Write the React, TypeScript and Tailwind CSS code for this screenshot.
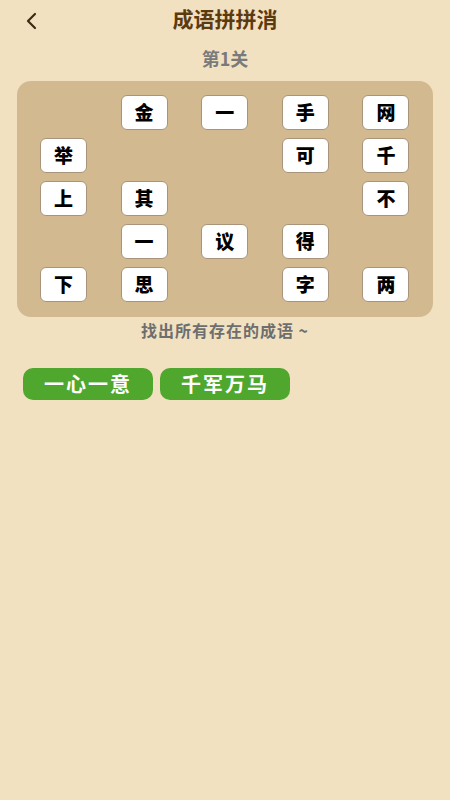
import React from "react";

const grid: (string | null)[][] = [
  [null, "金", "一", "手", "网"],
  ["举", null, null, "可", "千"],
  ["上", "其", null, null, "不"],
  [null, "一", "议", "得", null],
  ["下", "思", null, "字", "两"],
];

const found = ["一心一意", "千军万马"];

const font = { fontFamily: '"Noto Sans CJK SC", "Noto Sans", sans-serif' };

export default function App() {
  return (
    <div className="min-h-[800px] w-[450px] bg-[#f2e1c0]" style={font}>
      <div className="relative flex h-[36px] items-center justify-center">
        <button className="absolute left-[20px] top-[7px] p-1 text-[#3e2b12]">
          <svg width="16" height="20" viewBox="0 0 16 20" fill="none">
            <path d="M11 3L4 10l7 7" stroke="currentColor" strokeWidth="2.2" strokeLinecap="round" strokeLinejoin="round" />
          </svg>
        </button>
        <h1 className="text-[21px] font-bold leading-none text-[#5b3a10]">成语拼拼消</h1>
      </div>
      <div className="flex h-[45px] items-center justify-center text-[18px] font-bold text-[#7a7a7a]">
        第1关
      </div>
      <div className="mx-[17px] rounded-[14px] bg-[#d3b98f] px-[23px] pb-[15px] pt-[14px]">
        <div className="grid grid-cols-5 gap-x-[33px] gap-y-[8px]">
          {grid.flat().map((c, i) =>
            c ? (
              <div
                key={i}
                className="flex h-[35px] w-[47px] items-center justify-center rounded-[6px] border-[1.5px] border-[#a8947a] bg-white text-[19px] font-black text-black"
              >
                {c}
              </div>
            ) : (
              <div key={i} className="h-[35px] w-[47px]" />
            )
          )}
        </div>
      </div>
      <p className="mt-[1px] text-center text-[16px] font-bold tracking-[1px] text-[#6e6e6e]">找出所有存在的成语 ~</p>
      <div className="mt-[26px] flex gap-[7px] px-[23px]">
        {found.map((w) => (
          <div
            key={w}
            className="flex h-[32px] w-[130px] items-center justify-center rounded-[10px] bg-[#4fa82d] text-[20px] font-bold tracking-[2px] text-white"
          >
            {w}
          </div>
        ))}
      </div>
    </div>
  );
}
